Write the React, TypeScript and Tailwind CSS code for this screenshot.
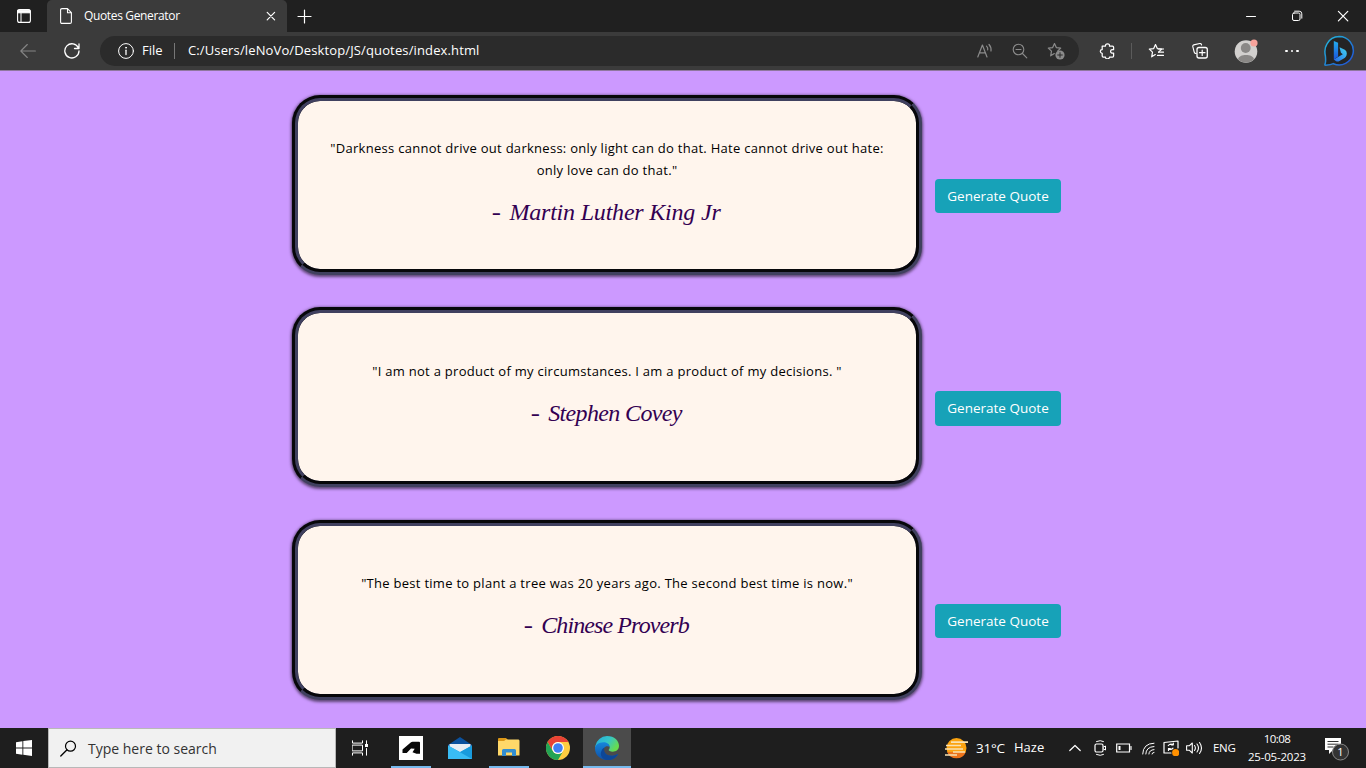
import type { ReactNode } from "react";

type IconProps = { children: ReactNode; className?: string; box?: string };

function Icon({ children, className = "", box = "0 0 16 16" }: IconProps) {
  return (
    <svg viewBox={box} className={`shrink-0 ${className}`} fill="none" stroke="currentColor" strokeLinecap="round" strokeLinejoin="round">
      {children}
    </svg>
  );
}

function TabStrip() {
  return (
    <div className="flex h-8 items-stretch bg-[#202020] text-white">
      <div className="flex w-[47px] items-center pl-[17px]">
        <Icon className="size-[14px]" box="0 0 14 14">
          <rect x=".6" y=".6" width="12.8" height="12.8" rx="2" strokeWidth="1.1" />
          <path d="M1 1.2h12v2.6H1z" fill="currentColor" />
          <path d="M4 4v9" strokeWidth="1" />
        </Icon>
      </div>
      <div className="flex w-60 items-center rounded-t-[5px] bg-[#3b3b3b] pl-[13px] pr-[10px]">
        <Icon className="h-4 w-3" box="0 0 12 16">
          <path d="M.6 2Q.6.6 2 .6H7.5L11.4 4.6V14q0 1.4-1.4 1.4H2Q.6 15.4.6 14zM7.5.8v4h3.8" strokeWidth="1.1" />
        </Icon>
        <span className="ml-3 whitespace-nowrap text-[12px] tracking-[-0.35px]">Quotes Generator</span>
        <Icon className="ml-auto size-3" box="0 0 12 12"><path d="m2.2 2.4 7.4 7.4m0-7.4L2.2 9.8" strokeWidth="1.2" /></Icon>
      </div>
      <div className="flex items-center pl-[10px]">
        <Icon className="size-[15px]" box="0 0 15 15"><path d="M7.5 1v13M1 7.5h13" strokeWidth="1.2" /></Icon>
      </div>
      <div className="ml-auto flex items-center">
        <div className="flex w-[46px] justify-center"><Icon className="size-3" box="0 0 12 12"><path d="M1.5 6.5h9" /></Icon></div>
        <div className="flex w-[46px] justify-center">
          <Icon className="size-3" box="0 0 12 12"><rect x="1.5" y="3" width="7.5" height="7.5" rx="1.5" /><path d="M3.6 1.2h4.6q2.6 0 2.6 2.6v4.4" /></Icon>
        </div>
        <div className="flex w-[46px] justify-center"><Icon className="size-3" box="0 0 12 12"><path d="m1.4 1.4 9.4 9.4m0-9.4-9.4 9.4" strokeWidth="1.2" /></Icon></div>
      </div>
    </div>
  );
}

const STAR = "M7.5 1.5 9.3 5.6 13.7 6.1 10.6 9.2M7.5 1.5 5.7 5.6 1.3 6.1 4.5 9.1 3.7 13.8 7.3 11.6";

function Bing() {
  return (
    <svg viewBox="0 0 32 32" className="size-8 shrink-0">
      <defs>
        <linearGradient id="ring" x1="0" y1="0" x2="1" y2="1"><stop stopColor="#23bbe2" /><stop offset=".4" stopColor="#218fd1" /><stop offset="1" stopColor="#214dda" /></linearGradient>
        <linearGradient id="stem" x1="0" y1="0" x2="0" y2="1"><stop stopColor="#25adec" /><stop offset="1" stopColor="#1954dc" /></linearGradient>
        <linearGradient id="bowl" x1="0" y1="1" x2="1" y2="0"><stop stopColor="#2469ec" /><stop offset="1" stopColor="#43d7ee" /></linearGradient>
      </defs>
      <path d="M16.2 1.5a14.2 14.2 0 1 1-5.8 27.2Q8 30 2.6 30.2q-1.2 0-.5-1.2Q3 27 2.4 21 .8 14 4 8.8A14.2 14.2 0 0 1 16.2 1.5Z" fill="#242424" stroke="url(#ring)" strokeWidth="1.5" />
      <path d="m10.8 6 4.3 1.8v13.6l-4.3 3.1Z" fill="url(#stem)" />
      <path d="m16.5 12.2 5.3 2.5q2 1 2 3.5c0 3-1.3 4.2-3 5.3l-4.4 2.6q-1.8 1-3.6 0l-2-1.6 9-5.3-1.9-1.4Z" fill="url(#bowl)" />
    </svg>
  );
}

function Toolbar() {
  return (
    <div className="flex h-[38px] items-center bg-[#3b3b3b] text-white">
      <div className="flex w-[100px] items-center pl-5">
        <Icon className="size-4 text-[#858585]"><path d="M15.4 8H.8m6.5-6.5L.8 8l6.5 6.5" strokeWidth="1.1" /></Icon>
        <Icon className="ml-7 size-4"><path d="M14.4 5A7.1 7.1 0 1 0 15 8M15 1v4.5h-4.5" strokeWidth="1.3" /></Icon>
      </div>
      <div className="flex h-[30px] w-[979px] items-center rounded-full bg-[#2b2b2b] pl-[18px] pr-[14px] text-[13px]">
        <Icon className="size-4"><circle cx="8" cy="8" r="7.4" /><path d="M8 7.2v4.3" strokeWidth="1.3" /><circle cx="8" cy="4.7" r=".5" fill="currentColor" /></Icon>
        <span className="ml-2 w-[21px] whitespace-nowrap">File</span>
        <div className="ml-[11px] h-4 w-px bg-[#777]" />
        <span className="ml-[13px] whitespace-nowrap tracking-[.13px]">C:/Users/leNoVo/Desktop/JS/quotes/index.html</span>
        <div className="ml-auto flex items-center text-[#8b8b8b]">
          <Icon className="h-4 w-4"><path d="m.8 14 4.6-12L10 14M2.5 9.8h5.8M9.5 3.1a4 4 0 0 1 1.2 3.8M12 1.5a8 8 0 0 1 2 6.5" strokeWidth="1.2" /></Icon>
          <Icon className="ml-[19px] size-4"><circle cx="6.5" cy="6.5" r="5.3" strokeWidth="1.1" /><path d="m10.5 10.5 4.3 4.3M4 6.5h5" strokeWidth="1.1" /></Icon>
          <Icon className="ml-[19px] size-[18px]" box="0 0 18 18"><path d={STAR} strokeWidth="1.2" /><circle cx="13" cy="13" r="4.6" fill="currentColor" stroke="none" /><path d="M13 10.7v4.6M10.7 13h4.6" stroke="#2b2b2b" /></Icon>
        </div>
      </div>
      <Icon className="ml-[20px] size-4"><path d="M2.2 3.1h3.3C5.4 1.7 6.1.8 7.5.8s2.2.9 2 2.3h3q1.1 0 1.1 1.1v2.5c-1.8-.3-3 .2-3 1.7s1.2 2 3 1.7v2.8q0 1.1-1.1 1.1h-3c.2 1.2-.7 1.8-2 1.8s-2.1-.6-2-1.8H3.3q-1.1 0-1.1-1.1v-2.6C.9 10.1.3 9.4.3 8.3s.7-1.800 1.900-1.800Z" transform="translate(1 0)" strokeWidth="1.25" /></Icon>
      <div className="ml-4 h-4 w-px bg-[#5b5b5b]" />
      <Icon className="ml-4 size-4"><path d={STAR} strokeWidth="1.2" /><path d="M10.6 6h5M10.600 9.200h5M9.500 12.400h6" strokeWidth="1.2" /></Icon>
      <Icon className="ml-7 size-4"><path d="m4.300 10.500-.8-.1q-1-.3-1.300-1.400L.8 3.600q-.3-1.300 1-1.700L7.800.5q1-.2 1.500.7l.3.8" strokeWidth="1.1" /><rect x="5" y="4.500" width="10.300" height="10.500" rx="2" strokeWidth="1.300" /><path d="M10.200 7v5.500M7.500 9.700H13" strokeWidth="1.200" /></Icon>
      <svg viewBox="0 0 24 24" className="ml-[26px] size-6 shrink-0"><circle cx="12" cy="12.500" r="11.300" fill="#d2d0ce" /><circle cx="11.700" cy="9" r="4.900" fill="#8a8886" /><path d="M4 20.300c1-5.600 15-5.600 16 0a11.300 11.300 0 0 1-16 0" fill="#8a8886" /><circle cx="20" cy="4" r="3.600" fill="#f7a39b" /></svg>
      <div className="ml-[27px] flex gap-[3px]"><i className="size-[2.5px] rounded-full bg-white" /><i className="size-[2.5px] rounded-full bg-white" /><i className="size-[2.5px] rounded-full bg-white" /></div>
      <div className="ml-auto mr-[11px]"><Bing /></div>
    </div>
  );
}

type Quote = { lines: string[]; author: string; authorClass: string; padding: string };

const quotes: Quote[] = [
  { lines: ['"Darkness cannot drive out darkness: only light can do that. Hate cannot drive out hate:', 'only love can do that."'], author: "Martin Luther King Jr", authorClass: "tracking-[-.2px]", padding: "pt-[36px]" },
  { lines: ['"I am not a product of my circumstances. I am a product of my decisions. "'], author: "Stephen Covey", authorClass: "tracking-[-.65px]", padding: "pt-[46.6px]" },
  { lines: ['"The best time to plant a tree was 20 years ago. The second best time is now."'], author: "Chinese Proverb", authorClass: "tracking-[-.9px]", padding: "pt-[46.2px]" },
];

function QuoteRow({ quote }: { quote: Quote }) {
  return (
    <div className="flex items-center">
      <article className={`flex h-[180px] w-[630px] flex-col items-center rounded-[28px] border-[6px] border-[#40405f] bg-[#fff5ed] shadow-[0_1px_3px_1px_rgba(0,0,0,0.55)] [border-style:groove] ${quote.padding}`}>
        {quote.lines.map((line) => (
          <p key={line} className="whitespace-pre text-[13px] leading-[22px] tracking-[.28px] text-black">{line}</p>
        ))}
        <p className="mt-[11px] flex gap-2 whitespace-nowrap font-['Liberation_Serif',serif] text-[24px] italic leading-[40px] text-[#330052]">
          <span className="origin-right scale-x-[1.15]">-</span>
          <span className={quote.authorClass}>{quote.author}</span>
        </p>
      </article>
      <button className="ml-[13px] mt-[22px] h-[34.4px] w-[126px] whitespace-nowrap rounded-[4px] bg-[#17a2b8] text-[13.5px] text-white">Generate Quote</button>
    </div>
  );
}

function Taskbar() {
  return (
    <footer className="flex h-10 items-stretch bg-[#1e1e1e] text-white">
      <div className="flex w-12 items-center pl-4">
        <svg viewBox="0 0 16 16" className="size-4" fill="#fff"><path d="M0 2.2 6.4 1.2v6.2H0zM7.3 1.1 16 0v7.4H7.3zM0 8.4h6.4v6.3L0 13.8zM7.3 8.4H16V16l-8.7-1.2z" /></svg>
      </div>
      <div className="flex w-72 items-center border border-[#b8b8b8] bg-[#f1f1f1] pl-[11px] text-[#333]">
        <Icon className="size-[17px] text-black" box="0 0 17 17"><circle cx="10.5" cy="6.2" r="5" strokeWidth="1.2" /><path d="m6.8 10-6 6" strokeWidth="1.3" /></Icon>
        <span className="ml-[11px] whitespace-nowrap text-[14px]">Type here to search</span>
      </div>
      <div className="flex w-[55px] items-center pl-4">
        <Icon className="size-4"><path d="M.5.8v2.3h10V.8M.5 15.2v-2.3h10v2.3M.5 5.1h10v5.8H.5zM14.5.8v3M14.5 8.500v6.700" /><path d="M13 4h3v3h-3z" fill="currentColor" stroke="none" /></Icon>
      </div>
      <div className="flex w-10 items-center justify-center border-b-2 border-[#76b9ed] pt-[2px]">
        <svg viewBox="0 0 24 24" className="size-6"><path fill="#fff" d="M0 0h24v24H0z" /><path d="M3.500 17v-3.500L12 6.200q.7-.5 1.500-.5H20q1 0 1 1v11H17.500l-4-1.500 2.200-3.500-3.700-.2-3.800 4q-.5.5-1.200.5z" fill="#080808" /></svg>
      </div>
      <div className="flex w-[58px] items-center justify-center">
        <svg viewBox="0 0 24 24" className="size-6"><path d="m0 9 12-8 12 8v14H0z" fill="#0b519d" /><path d="M1.5 8h21v9l-10 2-11-3z" fill="#e8edf3" /><path d="M0 9.5 12 16l12-6.5V23H0z" fill="#24a9e8" /><path d="m24 9.5-12 6.7L0 23h24z" fill="#199bdd" /><path d="m0 9.5 12 6.7L24 23H0z" fill="#39bcf4" /></svg>
      </div>
      <div className="flex w-10 items-center justify-center border-b-2 border-[#76b9ed]">
        <svg viewBox="0 0 24 24" className="size-6"><path d="M1 4q0-1 1-1h7l2 2-2 3H1z" fill="#dc9717" /><path d="M9 4.500h12.500Q22.500 4.500 22.500 6v14.500H1V6h6z" fill="#ffd869" /><path d="M5 21v-5.500q0-1.500 1.500-1.500h11q1.500 0 1.500 1.500V21h-4v-3.500H9V21z" fill="#338ed0" /></svg>
      </div>
      <div className="flex w-[54px] items-center pl-[17px]">
        <svg viewBox="0 0 24 24" className="size-6"><circle cx="12" cy="12" r="12" fill="#ffcd40" /><path d="M1.6 6A12 12 0 0 1 22.4 6H12a6 6 0 0 0-5.2 9z" fill="#e94235" /><path d="M1.6 6A12 12 0 0 0 12 24l5.2-9A6 6 0 0 1 6.8 15z" fill="#23a455" /><circle cx="12" cy="12" r="6" fill="#fff" /><circle cx="12" cy="12" r="4.8" fill="#407ff3" /></svg>
      </div>
      <div className="flex w-12 items-center justify-center border-b-2 border-[#76b9ed] bg-[#4b4b4b] pt-[2px]">
        <svg viewBox="0 0 24 24" className="size-6">
          <defs><linearGradient id="edgeTop" x1="0" y1="0" x2="1" y2=".5"><stop stopColor="#23acdd" /><stop offset=".55" stopColor="#35c5c8" /><stop offset="1" stopColor="#67dc4e" /></linearGradient><linearGradient id="edgeLow" x1="0" y1="0" x2="0" y2="1"><stop stopColor="#1686db" /><stop offset="1" stopColor="#104fa5" /></linearGradient></defs>
          <path d="M.3 10A12 12 0 0 1 12 0c7.5 0 12 5 12 9.8 0 4.2-3.2 5.9-6.2 5.9-2.6 0-4.2-.9-4.2-1.6 0-.5 1.1-1 1.1-2.6 0-2.2-2-4-5-4C5 7.500 2 9 .3 12z" fill="url(#edgeTop)" />
          <path d="M0 12.5C0 9 4 6.200 8.500 6.200c3.200 0 6 1.600 6.200 4.800-1.800-1.200-4.700-.7-5.600 1.200-1.300 2.800.6 6.800 5.200 7.500 3.200.4 5.800-.3 8-1.500.6-.3.8.1.5.6A12 12 0 0 1 12 24C5.200 24 0 18.800 0 12.500" fill="url(#edgeLow)" />
          <path d="M9.600 11.500c-1.300 2.600-.1 6.800 4.700 8.100 3.200.5 5.800-.3 8-1.400.6-.3.8.1.5.6A12 12 0 0 1 12 24c-4.500-.5-6.500-4-6.100-7 .3-2.700 1.700-4.600 3.700-5.500" fill="#0d4797" />
        </svg>
      </div>
      <div className="ml-auto flex items-center whitespace-nowrap text-[13.5px]">
        <svg viewBox="0 0 25 22" className="h-[22px] w-[25px]"><circle cx="12.500" cy="11" r="10" fill="#fba310" /><path d="M3.200 15a10 10 0 0 0 18.600 0z" fill="#ed741b" /><path d="M7 5.200h17M2 8.500h15M1 12h18M9 15h12M1 18h12" stroke="#f9e2b4" strokeWidth="1.700" /></svg>
        <span className="ml-[7px] w-[29px] tracking-[-.2px]">31°C</span>
        <span className="ml-[9px] w-[31px] text-[13px]">Haze</span>
        <Icon className="ml-[24px] h-[14px] w-3" box="0 0 12 14"><path d="m.8 9.500 5.200-5 5.200 5" strokeWidth="1.200" /></Icon>
        <Icon className="ml-3 size-4"><rect x="2" y="4" width="8" height="8" rx="1.500" strokeWidth="1.200" /><path d="m10.500 7 2-1v4l-2-1M3.500 1.500q4-1.800 7 0M3.500 14.500q4 1.800 7 0" /></Icon>
        <Icon className="ml-[7px] mr-px h-4 w-4"><path d="M.7 4h12.800v8H.7z" strokeLinejoin="miter" strokeWidth="1.200" /><path d="M15 6.500v3" strokeWidth="1.200" /><path d="M2.500 6h2v4h-2z" fill="currentColor" stroke="none" /></Icon>
        <Icon className="ml-[9px] size-[13px]" box="0 0 13 13"><path d="M.7 12Q1 1.500 12 1.200M3.800 12Q4 5 12 4.500M6.900 12Q7 8 12 7.600M10 12q0-1.500 2-1.600" /></Icon>
        <Icon className="ml-2 size-4"><path d="M8 13H1V2.500L15 1v7M5.300 5.500q2-2.500 5-.7V3M10.300 4.800H8.500M10 8.200q-2 2.300-4.500.5v1.800m0-1.800h1.800" strokeWidth="1.200" /><circle cx="12.700" cy="12.700" r="3.600" fill="#ff9000" stroke="none" /></Icon>
        <Icon className="ml-[7px] h-4 w-[17px]" box="0 0 17 16"><path d="M.6 5.800h2.600L6.300 3v10l-3.100-2.800H.6zM8.500 5.500q1.800 2.500 0 5M11 4q3 4 0 8M13.500 2.500q4 5.500 0 11" strokeWidth="1.100" /></Icon>
        <span className="ml-[10px] w-[23px] text-[11.500px] tracking-[-.3px]">ENG</span>
        <div className="ml-[11px] flex w-[60px] flex-col items-center text-[11.500px] leading-[18px]"><span className="tracking-[-.6px]">10:08</span><span className="tracking-[-.2px]">25-05-2023</span></div>
        <svg viewBox="0 0 26 26" className="ml-[17px] mr-[16px] h-[26px] w-[26px]">
          <path d="M1 3h16v12H9l-4 4v-4H1z" fill="#fff" /><path d="M3.500 6.500h11M3.500 9.200h11M3.500 12h6" stroke="#333" />
          <circle cx="16.500" cy="17" r="8" fill="#333" stroke="#888" /><text x="16.500" y="21" textAnchor="middle" fill="#fff" fontSize="11">1</text>
        </svg>
      </div>
    </footer>
  );
}

export default function App() {
  return (
    <div className="flex h-[768px] w-[1366px] flex-col overflow-hidden bg-[#cc99ff] font-['Open_Sans','Noto_Sans',sans-serif]">
      <TabStrip />
      <Toolbar />
      <div className="h-px bg-[#8f779f]" />
      <main className="flex flex-1 flex-col gap-[32.4px] pl-[292px] pt-6">
        {quotes.map((quote) => <QuoteRow key={quote.author} quote={quote} />)}
      </main>
      <Taskbar />
    </div>
  );
}
